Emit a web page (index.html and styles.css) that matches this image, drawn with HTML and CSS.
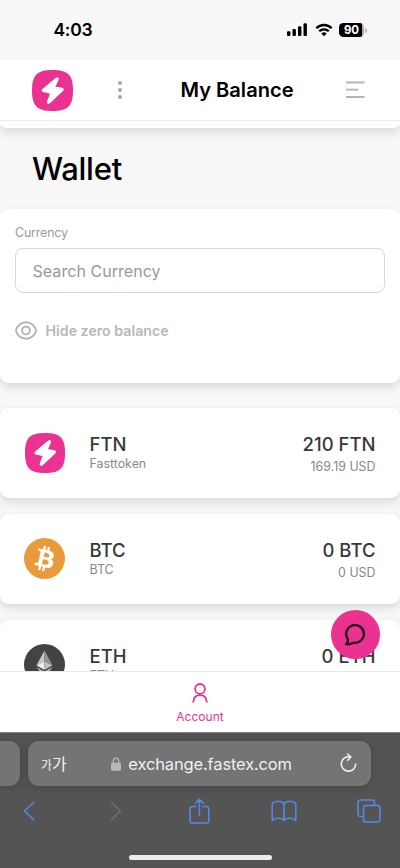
FILE: index.html
```html
<!DOCTYPE html>
<html lang="en">
<head>
<meta charset="utf-8">
<title>My Balance</title>
<link rel="stylesheet" href="styles.css">
</head>
<body>
<svg width="0" height="0" class="defs" aria-hidden="true">
  <symbol id="bolt" viewBox="0 0 41 41">
    <path d="M20.5 0C36 0 41 5 41 20.5S36 41 20.5 41 0 36 0 20.5 5 0 20.5 0z" fill="#ea3390"/>
    <path d="M25 9 11.500 20.300 20.300 22.400 16.700 32 30 19.400 21 17.900z" fill="#fff" stroke="#fff" stroke-width="3.500" stroke-linejoin="round"/>
  </symbol>
</svg>
<div class="phone">
  <div class="status">
    <span class="clock">4:03</span>
    <div class="signals">
      <svg width="21" height="14" viewBox="0 0 21 14"><rect x="0" y="8.3" width="3.4" height="4.7" rx="1"/><rect x="5.500" y="6" width="3.4" height="7" rx="1"/><rect x="11" y="3.3" width="3.4" height="9.7" rx="1"/><rect x="16.500" y="0.3" width="3.4" height="12.7" rx="1"/></svg>
      <svg width="18" height="14" viewBox="0 0 18 14" fill="none" stroke="#000" stroke-width="2.3"><path d="M1.3 5.2C5.6.9 12.4.9 16.7 5.2M4.2 8.3c2.7-2.7 6.9-2.7 9.6 0"/><path d="M6.3 10.5Q9 8.1 11.7 10.5L9 13.2z" fill="#000" stroke="none"/></svg>
      <div class="battery"><span class="level">90</span><i class="nub"></i></div>
    </div>
  </div>
  <header class="header">
    <svg class="brand" width="41" height="41"><use href="#bolt"/></svg>
    <svg class="dots" width="6" height="20" viewBox="0 0 6 20" fill="#aaa"><circle cx="3" cy="3" r="2.1"/><circle cx="3" cy="10" r="2.1"/><circle cx="3" cy="17" r="2.1"/></svg>
    <h1>My Balance</h1>
    <svg class="menu" width="19" height="18" viewBox="0 0 19 18" stroke="#b5b5b5" stroke-width="1.8"><path d="M0 1.5h18.5M0 8.7h12.3M0 16h18.5"/></svg>
  </header>
  <main class="content">
    <div class="previous"></div>
    <h2>Wallet</h2>
    <section class="panel">
      <label for="search">Currency</label>
      <div class="field" id="search"><span>Search Currency</span></div>
      <div class="toggle">
        <svg width="22" height="19" viewBox="0 0 22 19" fill="none" stroke="#b4b4b4" stroke-width="1.9"><path d="M1 9.500C1.500 5 6 1.200 11 1.200S20.500 5 21 9.500c-.5 4.500-5 8.300-10 8.300S1.500 14 1 9.500z"/><circle cx="11" cy="9.500" r="3.900"/></svg>
        <span>Hide zero balance</span>
      </div>
    </section>
    <section class="coin">
      <svg class="token" width="40" height="40" viewBox="0 0 41 41"><use href="#bolt" width="41" height="41"/></svg>
      <div class="name"><b>FTN</b><small>Fasttoken</small></div>
      <div class="amount"><b>210 FTN</b><small>169.19 USD</small></div>
    </section>
    <section class="coin">
      <svg width="41" height="41" viewBox="0 0 32 32"><circle cx="16" cy="16" r="16" fill="#e99a3b"/><path fill="#fff" d="M23.189 14.02c.314-2.096-1.283-3.223-3.465-3.975l.708-2.840-1.728-.430-.690 2.765c-.454-.114-.920-.220-1.385-.326l.695-2.783L15.596 6l-.708 2.839c-.376-.086-.746-.170-1.104-.260l.002-.009-2.384-.595-.460 1.846s1.283.294 1.256.312c.700.175.826.638.805 1.006l-.806 3.235c.048.012.110.030.180.057l-.183-.045-1.130 4.532c-.086.212-.303.531-.793.410.018.025-1.256-.313-1.256-.313l-.858 1.978 2.250.561c.418.105.828.215 1.231.318l-.715 2.872 1.727.430.708-2.840c.472.127.930.245 1.378.357l-.706 2.828 1.728.430.715-2.866c2.948.558 5.164.333 6.097-2.333.752-2.146-.037-3.385-1.588-4.192 1.130-.260 1.980-1.003 2.207-2.538zm-3.950 5.538c-.533 2.147-4.148.986-5.320.695l.950-3.805c1.172.293 4.929.872 4.370 3.110zm.535-5.569c-.487 1.953-3.495.960-4.470.717l.860-3.450c.975.243 4.118.696 3.610 2.733z"/></svg>
      <div class="name"><b>BTC</b><small>BTC</small></div>
      <div class="amount"><b>0 BTC</b><small>0 USD</small></div>
    </section>
    <section class="coin">
      <svg width="41" height="41" viewBox="0 0 41 41"><circle cx="20.500" cy="20.500" r="20.500" fill="#434343"/><path d="M20.500 6.500v11l-8 3.700z" fill="#c9c9c9"/><path d="M20.500 6.500v11l8 3.700z" fill="#929292"/><path d="M12.500 21.200 20.500 17.500v8.600z" fill="#f0f0f0"/><path d="M28.500 21.200 20.500 17.500v8.600z" fill="#c0c0c0"/><path d="M12.500 22.900 20.500 27.700l8-4.800-8 11z" fill="#bbb"/></svg>
      <div class="name"><b>ETH</b><small>ETH</small></div>
      <div class="amount"><b>0 ETH</b></div>
    </section>
    <div class="chat"><svg width="23" height="23" viewBox="0 0 22 22" fill="none" stroke="#2b1022" stroke-width="2.300" stroke-linejoin="round"><path d="M3.500 15.200A8.500 8.500 0 1 1 9.500 18.900Q5.500 20.700 2 20.300 4.300 18.200 3.500 15.200z"/></svg></div>
  </main>
  <nav class="tabs">
    <svg width="16" height="20" viewBox="0 0 16 20" fill="none" stroke="#ea3390" stroke-width="1.800" stroke-linecap="round"><circle cx="8" cy="5.900" r="4.900"/><path d="M1.300 18.800c.3-4.500 2.900-6.600 6.700-6.600s6.400 2.100 6.700 6.600"/></svg>
    <span>Account</span>
  </nav>
  <footer class="browser">
    <div class="bar">
      <div class="neighbor"></div>
      <div class="address">
        <span class="reader"><small>가</small>가</span>
        <span class="host"><svg width="10" height="14" viewBox="0 0 10 14"><path d="M2.300 7V3.800a2.700 2.700 0 0 1 5.400 0V7" fill="none" stroke="#b9b8bd" stroke-width="1.300"/><rect y="5.800" width="10" height="8" rx="1.500" fill="#b9b8bd"/></svg><span>exchange.fastex.com</span></span>
        <svg class="reload" width="17" height="20" viewBox="0 0 17 20" fill="none" stroke="#f1f1f1" stroke-width="1.600" stroke-linecap="round" stroke-linejoin="round"><path d="M10.500 4A7.200 7.200 0 1 0 15.700 11M7.600 1l3.300 3-3.300 3.300"/></svg>
      </div>
    </div>
    <div class="tools">
      <svg width="12" height="20" viewBox="0 0 12 20"><path d="M10.500 1.500 1.500 10l9 8.500"/></svg>
      <svg class="off" width="12" height="20" viewBox="0 0 12 20"><path d="M1.500 1.500 10.500 10l-9 8.500"/></svg>
      <svg width="21" height="26" viewBox="0 0 21 26"><path d="M7 8.500H3.500Q1 8.500 1 11v11.500Q1 25 3.500 25h13.800q2.500 0 2.500-2.500V11q0-2.500-2.500-2.500H14M10.400 17V1.500M6.300 5.300l4.100-4 4.100 4"/></svg>
      <svg width="26" height="22" viewBox="0 0 26 22"><path d="M13 4v16.500M13 4Q11.500 1.200 7.500 1.200 3 1.200 1.200 4v16.500Q3 18.300 7.300 18.300q4.200 0 5.700 2.200 1.500-2.200 5.700-2.200 4.300 0 6.100 2.200V4Q23 1.200 18.500 1.200 14.500 1.200 13 4z"/></svg>
      <svg width="24" height="24" viewBox="0 0 24 24"><rect x="6.500" y="6.500" width="16.500" height="16.500" rx="2.500"/><path d="M6.500 17.500h-3Q1 17.500 1 15V3.500Q1 1 3.500 1H15q2.500 0 2.500 2.500v3"/></svg>
    </div>
    <div class="home"></div>
  </footer>
</div>
</body>
</html>
```
FILE: styles.css
```css
* { box-sizing: border-box; }
body { margin: 0; font-family: Inter, "Noto Sans CJK KR", sans-serif; color: #000; }
svg { display: block; flex: none; }
.defs { position: absolute; }
h1, h2 { margin: 0; font-weight: 500; white-space: nowrap; }
.phone { width: 400px; height: 868px; display: flex; flex-direction: column; background: #f7f7f7; overflow: hidden; }
.status { height: 60px; flex: none; display: flex; justify-content: space-between; padding: 20px 33px 0 53.5px; background: #f7f7f7; }
.clock { font-size: 17.5px; line-height: 20px; font-weight: 600; letter-spacing: -.3px; }
.signals { display: flex; gap: 6.5px; padding-top: 3px; }
.battery { display: flex; align-items: center; gap: 1px; height: 14px; }
.level { width: 25px; height: 14px; border-radius: 4.5px; background: linear-gradient(90deg, #000 92%, #aaa 92%); color: #fff; font-size: 11.5px; line-height: 14px; font-weight: 700; text-align: center; }
.nub { width: 2px; height: 5px; border-radius: 0 2px 2px 0; background: #bbb; }
.header { height: 61px; flex: none; display: flex; align-items: center; padding: 0 35px 0 32px; background: #fff; border-bottom: 1px solid #ebebeb; }
.brand { margin-top: 1px; }
.dots { margin-left: 44px; }
.header h1 { margin-left: 57.5px; font-size: 20.1px; line-height: 24px; font-weight: 600; }
.menu { margin-left: auto; }
.content { position: relative; height: 550px; flex: none; overflow: hidden; display: flex; flex-direction: column; }
.previous { height: 7px; flex: none; background: #fff; border-radius: 0 0 8px 8px; box-shadow: 0 4px 9px rgba(0,0,0,.15); }
.content h2 { height: 81px; flex: none; padding: 21px 32px; font-size: 31px; line-height: 40px; font-weight: 450; letter-spacing: -.25px; }
.panel, .coin { flex: none; background: #fff; border-radius: 9px; box-shadow: 0 4px 9px rgba(0,0,0,.12); }
.panel { height: 174px; padding: 15px; }
.panel label { display: block; color: #999; font-size: 12.4px; line-height: 18px; letter-spacing: -.15px; }
.field { height: 45px; margin-top: 6px; display: flex; align-items: center; padding-left: 16.5px; border: 1px solid #d9d9d9; border-radius: 8px; color: #999; font-size: 16.1px; }
.toggle { display: flex; align-items: center; gap: 8.5px; height: 20px; margin-top: 27px; color: #b8b8b8; font-size: 14.2px; font-weight: 600; }
.coin { height: 90px; margin-top: 16px; display: flex; align-items: center; padding: 0 24.5px 1px 24px; }
.panel + .coin { margin-top: 25px; }
.token { margin: 1px .5px 0; }
.name { margin: 0 0 1px 24.5px; }
.coin b, .coin small { display: block; white-space: nowrap; }
.coin b { font-size: 18.5px; line-height: 22px; font-weight: 500; color: #393939; }
.coin small { font-size: 12.4px; line-height: 17px; color: #888; }
.amount { height: 39px; margin: 0 0 1px auto; text-align: right; }
.amount small { margin-top: 3px; }
.chat { position: absolute; right: 20.5px; bottom: 12px; width: 49px; height: 49px; border-radius: 50%; background: #ea3390; display: flex; align-items: center; justify-content: center; }
.tabs { height: 61px; flex: none; display: flex; flex-direction: column; align-items: center; gap: 6.5px; padding-top: 11px; background: #fff; border-top: 1px solid #e8e8e8; color: #ea3390; font-size: 12px; line-height: 14px; }
.browser { flex: 1; display: flex; flex-direction: column; background: #545454; border-top: 1px solid #858585; }
.bar { display: flex; gap: 8px; padding-top: 8px; }
.neighbor { width: 20px; height: 45px; border-radius: 0 11px 11px 0; background: #747474; box-shadow: 0 1px 8px rgba(0,0,0,.2); }
.address { width: 343px; height: 45px; display: flex; align-items: center; justify-content: space-between; padding: 0 13.5px 0 13px; border-radius: 11px; background: #747474; box-shadow: 0 1px 8px rgba(0,0,0,.2); color: #f1f1f1; }
.reader { font-family: "Noto Sans CJK KR", sans-serif; font-size: 16px; line-height: 20px; }
.reader small { font-size: 12px; }
.host { display: flex; align-items: center; gap: 7px; margin-right: 4px; font-size: 16.5px; letter-spacing: -.15px; }
.reload { margin-top: -2px; }
.tools { display: grid; grid-template-columns: repeat(5, 85px); align-items: center; justify-items: center; width: 425px; height: 28px; margin: 11px 0 0 -13.5px; }
.tools svg { fill: none; stroke: #5389e5; stroke-width: 1.6; stroke-linecap: round; stroke-linejoin: round; }
.tools svg.off { margin-left: 4px; stroke: #707070; }
.home { width: 143px; height: 5px; margin: 29.5px auto 0; border-radius: 3px; background: #ededed; }
```
